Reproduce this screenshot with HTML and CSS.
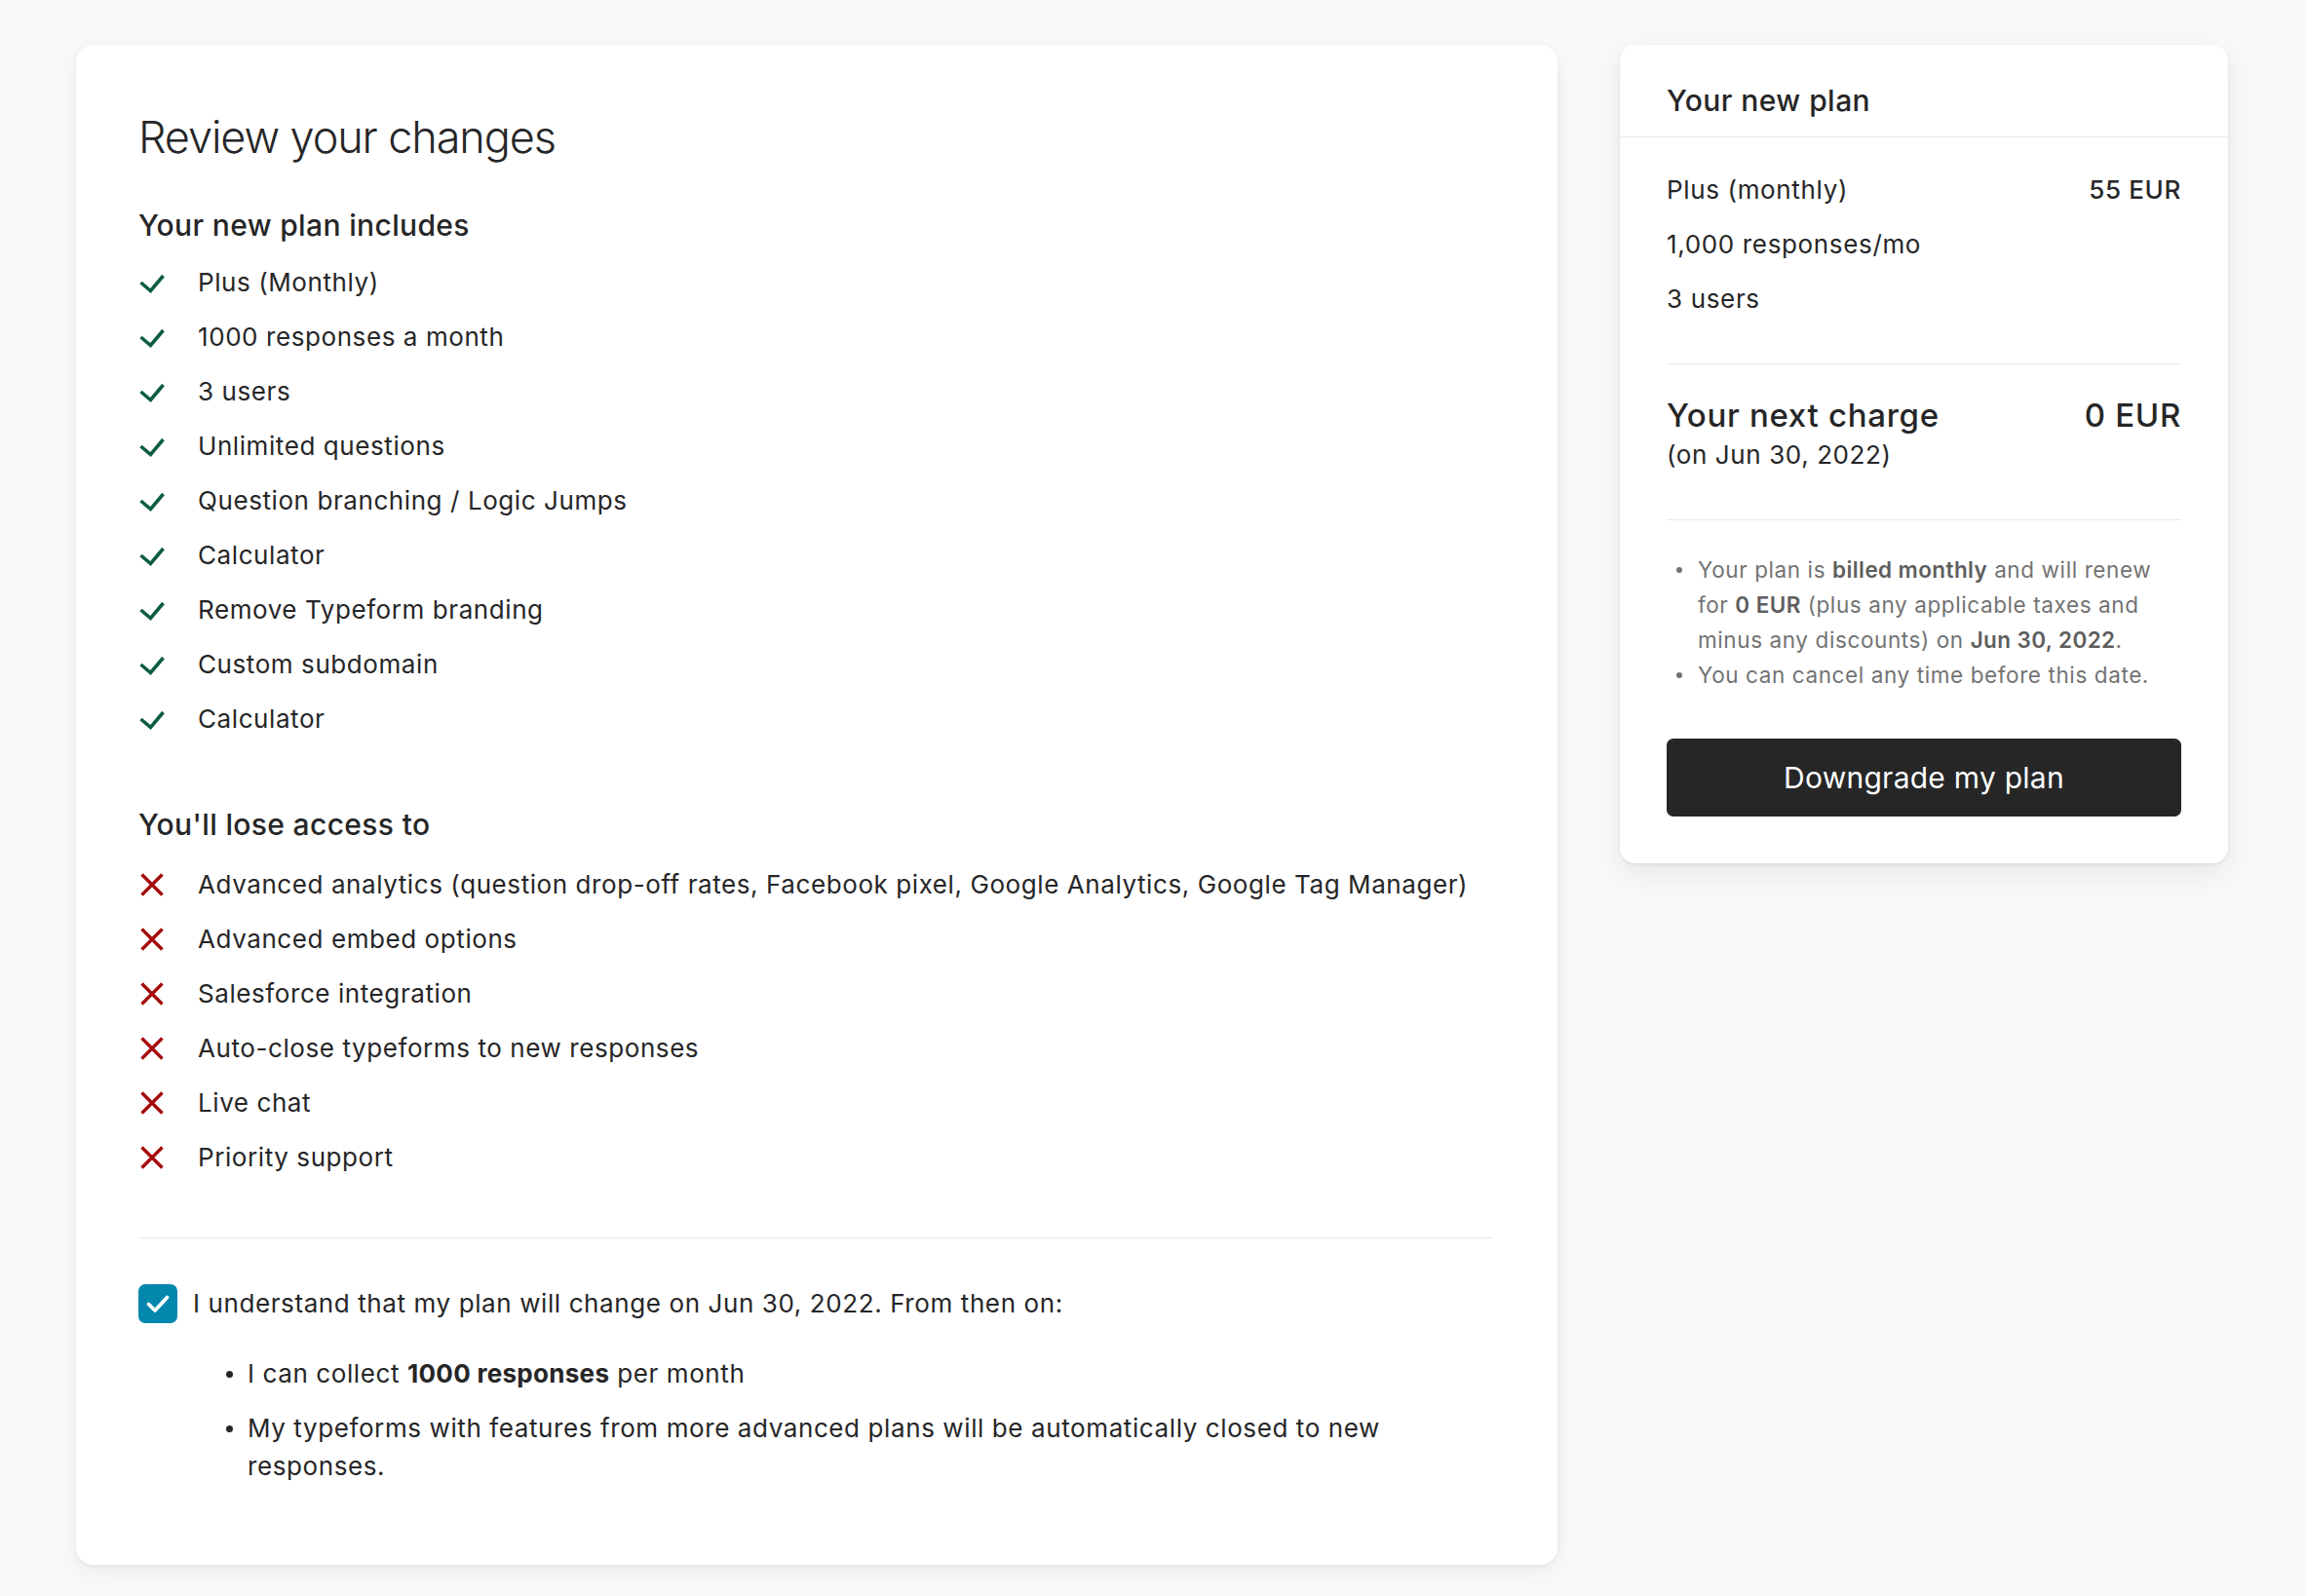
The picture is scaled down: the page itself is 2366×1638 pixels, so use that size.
FILE: index.html
```html
<!DOCTYPE html>
<html lang="en">
<head>
<meta charset="utf-8">
<title>Review your changes</title>
<link rel="stylesheet" href="styles.css">
</head>
<body>
<div class="page">
  <main class="card review">
    <h1 class="title">Review your changes</h1>

    <section class="group">
      <h2 class="group-title">Your new plan includes</h2>
      <ul class="features">
        <li class="feature"><svg class="icon" viewBox="0 0 26 26"><path class="ok" d="M1.5 13 L11.5 21.5 L24.5 6"/></svg><span>Plus (Monthly)</span></li>
        <li class="feature"><svg class="icon" viewBox="0 0 26 26"><path class="ok" d="M1.5 13 L11.5 21.5 L24.5 6"/></svg><span>1000 responses a month</span></li>
        <li class="feature"><svg class="icon" viewBox="0 0 26 26"><path class="ok" d="M1.5 13 L11.5 21.5 L24.5 6"/></svg><span>3 users</span></li>
        <li class="feature"><svg class="icon" viewBox="0 0 26 26"><path class="ok" d="M1.5 13 L11.5 21.5 L24.5 6"/></svg><span>Unlimited questions</span></li>
        <li class="feature"><svg class="icon" viewBox="0 0 26 26"><path class="ok" d="M1.5 13 L11.5 21.5 L24.5 6"/></svg><span>Question branching / Logic Jumps</span></li>
        <li class="feature"><svg class="icon" viewBox="0 0 26 26"><path class="ok" d="M1.5 13 L11.5 21.5 L24.5 6"/></svg><span>Calculator</span></li>
        <li class="feature"><svg class="icon" viewBox="0 0 26 26"><path class="ok" d="M1.5 13 L11.5 21.5 L24.5 6"/></svg><span>Remove Typeform branding</span></li>
        <li class="feature"><svg class="icon" viewBox="0 0 26 26"><path class="ok" d="M1.5 13 L11.5 21.5 L24.5 6"/></svg><span>Custom subdomain</span></li>
        <li class="feature"><svg class="icon" viewBox="0 0 26 26"><path class="ok" d="M1.5 13 L11.5 21.5 L24.5 6"/></svg><span>Calculator</span></li>
      </ul>
    </section>

    <section class="group group-lose">
      <h2 class="group-title">You'll lose access to</h2>
      <ul class="features features-lose">
        <li class="feature"><svg class="icon" viewBox="0 0 26 26"><path class="no" d="M2.5 2.5 L23.5 23.5 M23.5 2.5 L2.5 23.5"/></svg><span>Advanced analytics (question drop-off rates, Facebook pixel, Google Analytics, Google Tag Manager)</span></li>
        <li class="feature"><svg class="icon" viewBox="0 0 26 26"><path class="no" d="M2.5 2.5 L23.5 23.5 M23.5 2.5 L2.5 23.5"/></svg><span>Advanced embed options</span></li>
        <li class="feature"><svg class="icon" viewBox="0 0 26 26"><path class="no" d="M2.5 2.5 L23.5 23.5 M23.5 2.5 L2.5 23.5"/></svg><span>Salesforce integration</span></li>
        <li class="feature"><svg class="icon" viewBox="0 0 26 26"><path class="no" d="M2.5 2.5 L23.5 23.5 M23.5 2.5 L2.5 23.5"/></svg><span>Auto-close typeforms to new responses</span></li>
        <li class="feature"><svg class="icon" viewBox="0 0 26 26"><path class="no" d="M2.5 2.5 L23.5 23.5 M23.5 2.5 L2.5 23.5"/></svg><span>Live chat</span></li>
        <li class="feature"><svg class="icon" viewBox="0 0 26 26"><path class="no" d="M2.5 2.5 L23.5 23.5 M23.5 2.5 L2.5 23.5"/></svg><span>Priority support</span></li>
      </ul>
    </section>

    <hr class="divider">

    <label class="confirm">
      <span class="checkbox"><svg viewBox="0 0 40 40"><path d="M10.5 20.5 L17 27 L29.5 13.5"/></svg></span>
      <span class="confirm-text">I understand that my plan will change on Jun 30, 2022. From then on:</span>
    </label>

    <ul class="consequences">
      <li class="consequence"><span class="dot"></span><span>I can collect <strong>1000 responses</strong> per month</span></li>
      <li class="consequence"><span class="dot"></span><span>My typeforms with features from more advanced plans will be automatically closed to new responses.</span></li>
    </ul>
  </main>

  <aside class="card summary">
    <header class="summary-header">Your new plan</header>
    <div class="summary-body">
      <div class="plan-rows">
        <div class="plan-row"><span>Plus (monthly)</span><span class="price">55 EUR</span></div>
        <div class="plan-row"><span>1,000 responses/mo</span></div>
        <div class="plan-row"><span>3 users</span></div>
      </div>
      <hr class="rule">
      <div class="charge">
        <div class="charge-line"><span>Your next charge</span><span>0 EUR</span></div>
        <div class="charge-date">(on Jun 30, 2022)</div>
      </div>
      <hr class="rule rule-notes">
      <ul class="notes">
        <li class="note"><span class="note-dot"></span><span>Your plan is <strong>billed monthly</strong> and will renew for <strong>0 EUR</strong> (plus any applicable taxes and minus any discounts) on <strong>Jun 30, 2022</strong>.</span></li>
        <li class="note"><span class="note-dot"></span><span>You can cancel any time before this date.</span></li>
      </ul>
      <button class="btn" type="button">Downgrade my plan</button>
    </div>
  </aside>
</div>
</body>
</html>
```

FILE: styles.css
```css
* { box-sizing: border-box; }

html, body {
  margin: 0;
  padding: 0;
  background: #f9f9f9;
}

body {
  font-family: Inter, "Noto Sans", "Liberation Sans", sans-serif;
  color: #262627;
  -webkit-font-smoothing: antialiased;
}

.page {
  display: flex;
  align-items: flex-start;
  gap: 64px;
  padding: 46px 80px 40px 78px;
}

.card {
  background: #ffffff;
  border-radius: 18px;
  box-shadow: 0 2px 4px rgba(0, 0, 0, 0.05), 0 6px 24px rgba(0, 0, 0, 0.06);
}

/* ---------- left card ---------- */
.review {
  flex: 1 1 auto;
  padding: 64px 66px 82px 64px;
}

.title {
  margin: 4px 0 0;
  font-size: 45px;
  line-height: 54px;
  font-weight: 300;
  letter-spacing: -1.1px;
}

.group-title {
  margin: 43px 0 0;
  font-size: 30px;
  line-height: 40px;
  font-weight: 500;
  letter-spacing: 0.35px;
}

.group-lose .group-title {
  margin-top: 60px;
}

.features {
  list-style: none;
  margin: 11px 0 0;
  padding: 0;
}

.features-lose {
  margin-top: 14px;
}

.feature {
  display: flex;
  align-items: center;
  gap: 34px;
  font-size: 26px;
  line-height: 56px;
  height: 56px;
  letter-spacing: 0.58px;
  white-space: nowrap;
}

.icon {
  flex: 0 0 26px;
  width: 26px;
  height: 26px;
  margin-left: 1px;
}

.icon .ok {
  fill: none;
  stroke: #0c5c45;
  stroke-width: 3.6;
  stroke-linecap: butt;
  stroke-linejoin: miter;
}

.icon .no {
  fill: none;
  stroke: #a50b0b;
  stroke-width: 3.4;
}

.divider {
  margin: 54px 0 0;
  border: 0;
  border-top: 1px solid #e6e6e6;
  height: 0;
}

.confirm {
  display: flex;
  align-items: center;
  gap: 16px;
  margin-top: 47px;
  font-size: 26px;
  line-height: 40px;
  letter-spacing: 0.6px;
}

.checkbox {
  flex: 0 0 40px;
  width: 40px;
  height: 40px;
  border-radius: 7px;
  background: #0487ad;
  display: flex;
}

.checkbox svg {
  width: 40px;
  height: 40px;
}

.checkbox path {
  fill: none;
  stroke: #ffffff;
  stroke-width: 3.8;
  stroke-linecap: round;
  stroke-linejoin: round;
}

.consequences {
  list-style: none;
  margin: 32px 0 0;
  padding: 0 0 0 90px;
}

.consequence {
  display: flex;
  align-items: flex-start;
  font-size: 26px;
  line-height: 39px;
  letter-spacing: 0.6px;
}

.consequence + .consequence {
  margin-top: 17px;
}

.consequence strong {
  font-weight: 700;
  letter-spacing: 0.3px;
}

.dot {
  flex: 0 0 7px;
  width: 7px;
  height: 7px;
  border-radius: 50%;
  background: #262627;
  margin: 17px 15px 0 0;
}

/* ---------- right card ---------- */
.summary {
  flex: 0 0 624px;
  width: 624px;
  border-radius: 16px;
  box-shadow: 0 2px 4px rgba(0, 0, 0, 0.06), 0 10px 30px rgba(0, 0, 0, 0.08);
}

.summary-header {
  padding: 37px 48px 17px 48px;
  font-size: 30px;
  line-height: 40px;
  font-weight: 500;
  letter-spacing: 0.45px;
  border-bottom: 1px solid #e8e8e8;
}

.summary-body {
  padding: 26px 48px 48px 48px;
}

.plan-row {
  display: flex;
  justify-content: space-between;
  font-size: 26px;
  line-height: 56px;
  letter-spacing: 0.65px;
}

.price {
  font-weight: 500;
}

.rule {
  margin: 38px 0 0;
  border: 0;
  border-top: 1px solid #e8e8e8;
  height: 0;
}

.charge {
  margin-top: 32px;
}

.charge-line {
  display: flex;
  justify-content: space-between;
  font-size: 33px;
  line-height: 40px;
  font-weight: 500;
  letter-spacing: 0.7px;
}

.charge-date {
  margin-top: 1px;
  font-size: 26px;
  line-height: 40px;
  letter-spacing: 0.6px;
}

.rule-notes {
  margin-top: 46px;
}

.notes {
  list-style: none;
  margin: 33px 0 0;
  padding: 0 0 0 10px;
  color: #737373;
  font-size: 22.5px;
  line-height: 36px;
  letter-spacing: 0.6px;
}

.note {
  display: flex;
  align-items: flex-start;
}

.note strong {
  font-weight: 600;
  color: #5e5e5e;
  letter-spacing: 0.4px;
}

.note-dot {
  flex: 0 0 6px;
  width: 6px;
  height: 6px;
  border-radius: 50%;
  background: #737373;
  margin: 15px 16px 0 0;
}

.btn {
  display: block;
  width: 100%;
  height: 80px;
  margin-top: 47px;
  border: 0;
  border-radius: 7px;
  background: #262627;
  color: #ffffff;
  font-family: inherit;
  font-size: 30px;
  font-weight: 400;
  letter-spacing: 0.25px;
  cursor: pointer;
}
```
